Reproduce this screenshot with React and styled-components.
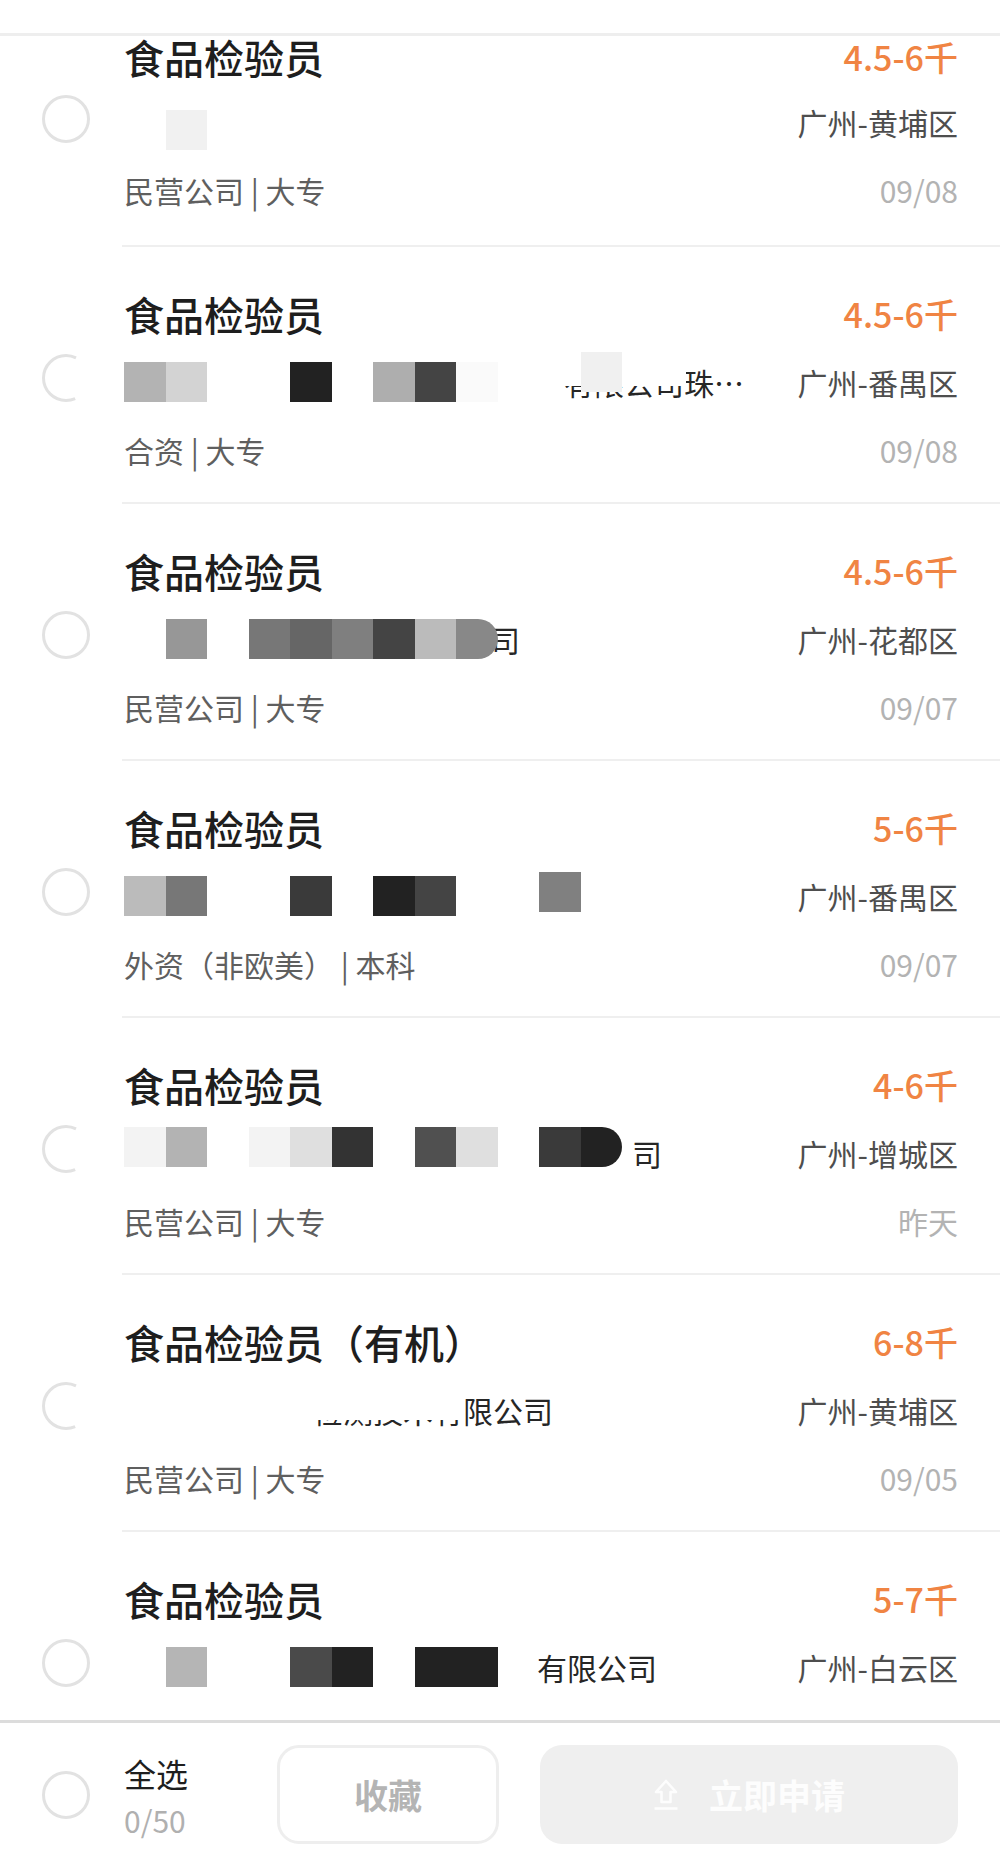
import styled, { createGlobalStyle } from 'styled-components'

const CELL = 41.5

const jobs = [
  {
    title: '食品检验员', salary: '4.5-6千', location: '广州-黄埔区', meta: '民营公司 | 大专', date: '09/08',
    cells: [[1, '#f1f1f1', 8]],
  },
  {
    title: '食品检验员', salary: '4.5-6千', location: '广州-番禺区', meta: '合资 | 大专', date: '09/08', open: true,
    text: '有限公司珠…', textX: 440, veil: { x: 430, w: 132, h: 27 },
    cells: [[0, '#b3b3b3'], [1, '#d3d3d3'], [4, '#222'], [6, '#aeaeae'], [7, '#444'], [8, '#fafafa'], [11, '#f0f0f0', -10]],
  },
  {
    title: '食品检验员', salary: '4.5-6千', location: '广州-花都区', meta: '民营公司 | 大专', date: '09/07',
    text: '司', textX: 366,
    cells: [[1, '#979797'], [3, '#777'], [4, '#666'], [5, '#7f7f7f'], [6, '#444'], [7, '#bbb'], [8, '#888', 0, true]],
  },
  {
    title: '食品检验员', salary: '5-6千', location: '广州-番禺区', meta: '外资（非欧美） | 本科', date: '09/07',
    cells: [[0, '#bbb'], [1, '#777'], [4, '#3a3a3a'], [6, '#222'], [7, '#444'], [10, '#808080', -4]],
  },
  {
    title: '食品检验员', salary: '4-6千', location: '广州-增城区', meta: '民营公司 | 大专', date: '昨天', open: true,
    text: '司', textX: 508,
    cells: [[0, '#f3f3f3', -6], [1, '#b3b3b3', -6], [3, '#f3f3f3', -6], [4, '#dfdfdf', -6], [5, '#333', -6],
      [7, '#505050', -6], [8, '#dfdfdf', -6], [10, '#3a3a3a', -6], [11, '#222', -6, true]],
  },
  {
    title: '食品检验员（有机）', salary: '6-8千', location: '广州-黄埔区', meta: '民营公司 | 大专', date: '09/05', open: true,
    text: '检测技术有限公司', textX: 189, veil: { x: 146, w: 192, h: 33 },
    cells: [],
  },
  {
    title: '食品检验员', salary: '5-7千', location: '广州-白云区', meta: '', date: '',
    text: '有限公司', textX: 413,
    cells: [[1, '#b5b5b5'], [4, '#4a4a4a'], [5, '#222'], [7, '#222'], [8, '#222']],
  },
]

const GlobalStyle = createGlobalStyle`
  html, body {
    margin: 0;
    padding: 0;
    background: #fff;
  }
  body {
    font-family: "Noto Sans CJK SC", "Noto Sans", sans-serif;
    -webkit-font-smoothing: antialiased;
  }
`

const Page = styled.div`
  width: 1000px;
  height: 1872px;
  display: flex;
  flex-direction: column;
  overflow: hidden;
  background: #fff;
`

const TopStrip = styled.div`
  flex-shrink: 0;
  height: 33px;
  border-bottom: 3px solid #eeeeee;
`

const List = styled.div`
  flex: 1;
  overflow: hidden;
`

const Item = styled.div`
  display: flex;
  align-items: flex-start;
`

/* the first row is scrolled partly under the top strip */
const CheckCell = styled.div`
  width: 122px;
  flex-shrink: 0;
  display: flex;
  padding-left: 42px;
  box-sizing: border-box;
  margin-top: ${p => (p.$first ? '59px' : '107px')};
`

const CheckSvg = styled.svg`
  width: 48px;
  height: 48px;
  display: block;
`

const Body = styled.div`
  flex: 1;
  min-width: 0;
  padding: ${p => (p.$first ? '1px 42px 32px 2px' : '44px 42px 29px 2px')};
  border-bottom: 2px solid #efefef;
  display: flex;
  flex-direction: column;
  gap: 22px;
`

const Line = styled.div`
  display: flex;
  align-items: center;
  justify-content: space-between;
  height: ${p => p.$h || 46}px;
  line-height: ${p => p.$h || 46}px;
  white-space: nowrap;
`

const Title = styled.div`
  font-size: 40px;
  font-weight: 500;
  color: #1e1e1e;
`

const Salary = styled.div`
  font-size: 34px;
  font-weight: 500;
  color: #f08443;
`

const Company = styled.div`
  position: relative;
  flex: 1;
  height: 46px;
  font-size: 30px;
  color: #262626;
  padding-left: ${p => p.$x}px;
`

const Mosaic = styled.div`
  position: absolute;
  left: 0;
  top: 3px;
  display: flex;
`

const Block = styled.div`
  width: ${CELL}px;
  height: 40px;
  background: ${p => p.$color};
  transform: translateY(${p => p.$dy}px);
  border-radius: ${p => (p.$round ? '0 20px 20px 0' : '0')};
`

const Veil = styled.div`
  position: absolute;
  top: 0;
  left: ${p => p.$x}px;
  width: ${p => p.$w}px;
  height: ${p => p.$h}px;
  background: #fff;
`

const Location = styled.div`
  font-size: 30px;
  color: #4e4e4e;
`

const Meta = styled.div`
  font-size: 30px;
  color: #5f5f5f;
`

const DateText = styled.div`
  font-size: 30px;
  color: #b3b3b3;
`

const BottomBar = styled.div`
  flex-shrink: 0;
  height: 152px;
  box-sizing: border-box;
  border-top: 3px solid #dcdcdc;
  padding: 22px 42px 0 42px;
  display: flex;
  align-items: flex-start;
`

const BarRow = styled.div`
  flex: 1;
  height: 99px;
  display: flex;
  align-items: center;
`

const SelectLabel = styled.div`
  width: 153px;
  margin-left: 34px;
  display: flex;
  flex-direction: column;
  margin-top: 2px;
`

const SelectAll = styled.div`
  font-size: 32px;
  line-height: 48px;
  color: #1e1e1e;
`

const Counter = styled.div`
  font-size: 30px;
  line-height: 46px;
  color: #b0b0b0;
`

const Button = styled.div`
  height: 99px;
  box-sizing: border-box;
  border-radius: 22px;
  display: flex;
  align-items: center;
  justify-content: center;
  gap: 30px;
  font-size: 34px;
  font-weight: 700;
  width: ${p => p.$w}px;
  background: ${p => (p.$filled ? '#efefef' : '#fff')};
  border: ${p => (p.$filled ? 'none' : '3px solid #eeeeee')};
  color: ${p => (p.$filled ? '#fdfdfd' : '#b4b4b4')};
`

const Apply = styled(Button)`
  margin-left: 41px;
`

const Check = ({ open }) => (
  <CheckSvg viewBox="0 0 48 48">
    <circle
      cx="24"
      cy="24"
      r="22.5"
      fill="none"
      stroke="#e2e2e2"
      strokeWidth="3"
      strokeDasharray={open ? '90 51.4' : undefined}
      strokeDashoffset={open ? -25.7 : undefined}
    />
  </CheckSvg>
)

const UploadIcon = () => (
  <svg width="26" height="32" viewBox="0 0 26 32" fill="none" stroke="#fdfdfd" strokeWidth="2.6" strokeLinejoin="round">
    <path d="M13 2 L3 13 H8.5 V23 H17.5 V13 H23 Z" />
    <path d="M1.5 29.5 H24.5" />
  </svg>
)

const JobItem = ({ job, first }) => {
  const slots = []
  const max = job.cells.reduce((m, c) => Math.max(m, c[0]), -1)
  for (let i = 0; i <= max; i++) {
    const cell = job.cells.find(c => c[0] === i)
    slots.push(
      <Block
        key={i}
        $color={cell ? cell[1] : 'transparent'}
        $dy={cell && cell[2] ? cell[2] : 0}
        $round={cell && cell[3]}
      />
    )
  }
  return (
    <Item>
      <CheckCell $first={first}>
        <Check open={job.open} />
      </CheckCell>
      <Body $first={first}>
        <Line $h={first ? 40 : 46}>
          <Title>{job.title}</Title>
          <Salary>{job.salary}</Salary>
        </Line>
        <Line>
          <Company $x={job.textX || 0}>
            {job.text}
            {job.veil && <Veil $x={job.veil.x} $w={job.veil.w} $h={job.veil.h} />}
            <Mosaic>{slots}</Mosaic>
          </Company>
          <Location>{job.location}</Location>
        </Line>
        <Line>
          <Meta>{job.meta}</Meta>
          <DateText>{job.date}</DateText>
        </Line>
      </Body>
    </Item>
  )
}

export default function App() {
  return (
    <Page>
      <GlobalStyle />
      <TopStrip />
      <List>
        {jobs.map((job, i) => (
          <JobItem key={i} job={job} first={i === 0} />
        ))}
      </List>
      <BottomBar>
        <BarRow>
          <Check />
          <SelectLabel>
            <SelectAll>全选</SelectAll>
            <Counter>0/50</Counter>
          </SelectLabel>
          <Button $w={222}>收藏</Button>
          <Apply $w={418} $filled>
            <UploadIcon />
            <span>立即申请</span>
          </Apply>
        </BarRow>
      </BottomBar>
    </Page>
  )
}
